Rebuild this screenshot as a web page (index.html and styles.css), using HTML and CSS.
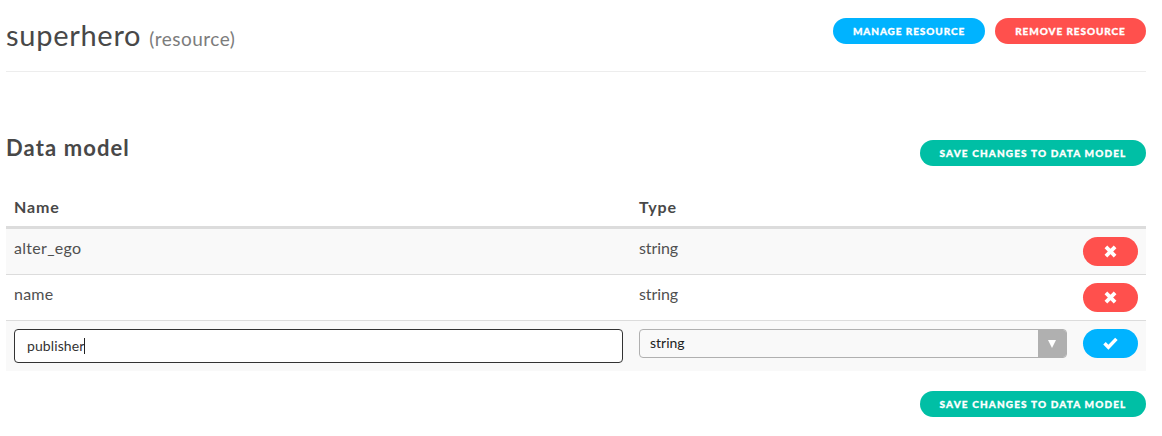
FILE: index.html
```html
<!DOCTYPE html>
<html lang="en">
<head>
<meta charset="utf-8">
<title>superhero</title>
<link rel="stylesheet" href="styles.css">
</head>
<body>
<header class="page-header">
  <h1 class="title"><span class="title-name">superhero</span><small class="title-kind">(resource)</small></h1>
  <div class="actions">
    <button class="btn btn-blue manage">Manage resource</button>
    <button class="btn btn-red remove">Remove resource</button>
  </div>
</header>
<section class="section-head">
  <h2 class="subtitle">Data model</h2>
  <button class="btn btn-green">Save changes to data model</button>
</section>
<div class="table">
  <div class="row head"><div>Name</div><div>Type</div><div></div></div>
  <div class="row odd">
    <div class="value ego">alter_ego</div><div class="value type">string</div>
    <button class="icon-btn btn-red" aria-label="Remove"><svg width="13" height="13" viewBox="0 0 13 13"><path d="M1.9 1.9 11.1 11.1M11.1 1.9 1.9 11.1" stroke="#fff" stroke-width="3.8"/></svg></button>
  </div>
  <div class="row">
    <div class="value">name</div><div class="value type">string</div>
    <button class="icon-btn btn-red" aria-label="Remove"><svg width="13" height="13" viewBox="0 0 13 13"><path d="M1.9 1.9 11.1 11.1M11.1 1.9 1.9 11.1" stroke="#fff" stroke-width="3.8"/></svg></button>
  </div>
  <div class="row odd">
    <div class="input"><span>publisher</span><i class="caret"></i></div>
    <div class="select"><span class="select-value">string</span><span class="arrow"><svg width="8" height="8" viewBox="0 0 8 8"><path d="M0 0h8L4 8z" fill="#fff"/></svg></span></div>
    <button class="icon-btn btn-blue" aria-label="Add"><svg width="15" height="13" viewBox="0 0 15 13"><path d="M1.5 6.2 5.4 10.2 13.4 1.9" fill="none" stroke="#fff" stroke-width="3.5"/></svg></button>
  </div>
</div>
<footer class="footer"><button class="btn btn-green">Save changes to data model</button></footer>
</body>
</html>
```
FILE: styles.css
```css
* { box-sizing: border-box; }
body {
  margin: 0;
  padding: 0 16px 0 6px;
  background: #fff;
  color: #484848;
  font-family: Lato, sans-serif;
  font-size: 16px;
}
h1, h2 { margin: 0; font-weight: 400; }
button { border: 0; margin: 0; padding: 0; font-family: inherit; color: #fff; }
.page-header {
  height: 72px;
  padding-top: 18px;
  border-bottom: 1px solid #ededed;
  display: flex;
  justify-content: space-between;
  align-items: flex-start;
}
.title { display: flex; align-items: baseline; gap: 8px; line-height: 34px; }
.title-name { font-size: 29px; letter-spacing: 0.72px; }
.title-kind { font-size: 19px; color: #7c7c7c; letter-spacing: 0.5px; }
.actions { display: flex; gap: 10px; }
.btn {
  height: 26px;
  width: 226px;
  border-radius: 13px;
  font-size: 10px;
  font-weight: 900;
  letter-spacing: 1.04px;
  text-transform: uppercase;
  white-space: nowrap;
  -webkit-text-stroke: 0.3px #fff;
}
.btn-green { letter-spacing: 1.14px; }
.manage { width: 152px; letter-spacing: 0.92px; }
.remove { width: 151px; letter-spacing: 0.92px; }
.btn-blue { background: #00b3ff; }
.btn-red { background: #ff504d; }
.btn-green { background: #00bfa5; }
.section-head {
  height: 115px;
  padding-top: 68px;
  display: flex;
  justify-content: space-between;
  align-items: flex-start;
}
.subtitle { font-size: 22px; font-weight: 700; line-height: 16px; letter-spacing: 1.1px; }
.row {
  display: grid;
  grid-template-columns: 609px 428px 55px;
  gap: 16px;
  padding: 8px;
  align-items: start;
  border-top: 1px solid #dcdcdc;
}
.row.head {
  height: 42px;
  padding-top: 10px;
  border-top: 0;
  border-bottom: 3px solid #dcdcdc;
  font-weight: 700;
  line-height: 19px;
  letter-spacing: 0.9px;
}
.head + .row { border-top: 0; }
.odd { background: #f9f9f9; }
.value { line-height: 21px; letter-spacing: 0.2px; color: #505050; }
.ego { letter-spacing: 0.3px; }
.type { letter-spacing: -0.1px; }
.icon-btn {
  height: 29px;
  border-radius: 14.5px;
  display: flex;
  align-items: center;
  justify-content: center;
}
.input {
  height: 34px;
  padding: 0 12px;
  border: 1px solid #333;
  border-radius: 4px;
  background: #fff;
  display: flex;
  align-items: center;
  font-size: 14px;
  line-height: 16px;
  letter-spacing: 0.1px;
  color: #333;
}
.caret { width: 1px; height: 16px; background: #222; }
.select {
  height: 29px;
  border: 1px solid #b0b0b0;
  border-radius: 4px;
  overflow: hidden;
  display: flex;
  justify-content: space-between;
  font-size: 14px;
  line-height: 26px;
  color: #222;
}
.select-value { padding-left: 10px; }
.arrow {
  width: 28px;
  background: #b0b0b0;
  display: flex;
  align-items: center;
  justify-content: center;
}
.footer { padding-top: 20px; display: flex; justify-content: flex-end; }
```
